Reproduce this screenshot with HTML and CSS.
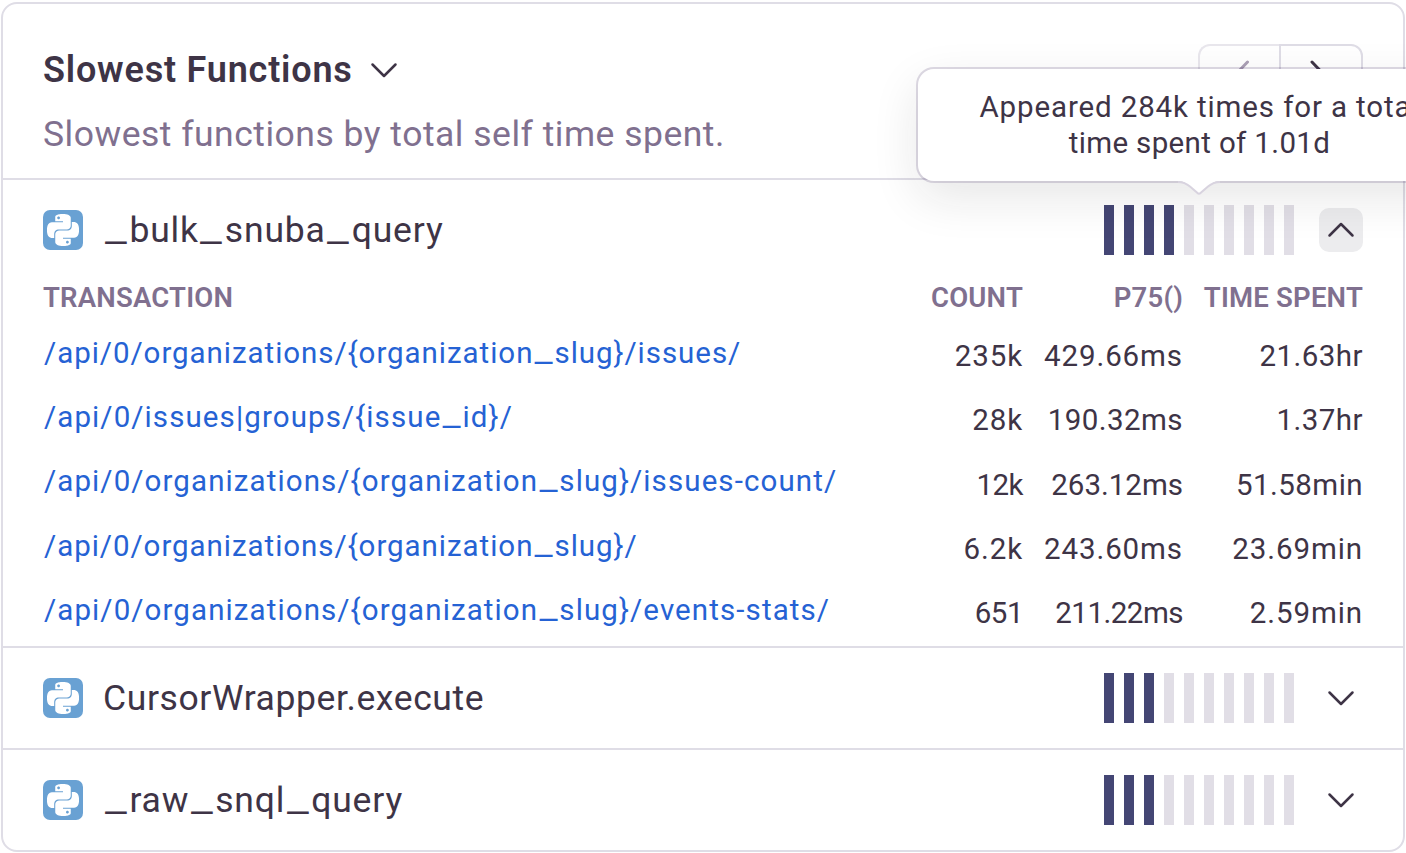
FILE: index.html
```
<!DOCTYPE html>
<html lang="en">
<head>
<meta charset="utf-8">
<title>Slowest Functions</title>
<link rel="stylesheet" href="styles.css">
</head>
<body>
<svg width="0" height="0" class="defs" aria-hidden="true">
  <symbol id="python" viewBox="0 0 24 24"><path fill="#fff" d="M14.25.18l.9.2.73.26.59.3.45.32.34.34.25.34.16.33.1.3.04.26.02.2-.01.13V8.5l-.05.63-.13.55-.21.46-.26.38-.3.31-.33.25-.35.19-.35.14-.33.1-.3.07-.26.04-.21.02H8.77l-.69.05-.59.14-.5.22-.41.27-.33.32-.27.35-.2.36-.15.37-.1.35-.07.32-.04.27-.02.21v3.06H3.17l-.21-.03-.28-.07-.32-.12-.35-.18-.36-.26-.36-.36-.35-.46-.32-.59-.28-.73-.21-.88-.14-1.05-.05-1.23.06-1.22.16-1.04.24-.87.32-.71.36-.57.4-.44.42-.33.42-.24.4-.16.36-.1.32-.05.24-.01h.16l.06.01h8.16v-.83H6.18l-.01-2.75-.02-.37.05-.34.11-.31.17-.28.25-.26.31-.23.38-.2.44-.18.51-.15.58-.12.64-.1.71-.06.77-.04.84-.02 1.27.05zm-6.3 1.98l-.23.33-.08.41.08.41.23.34.33.22.41.09.41-.09.33-.22.23-.34.08-.41-.08-.41-.23-.33-.33-.22-.41-.09-.41.09zm13.09 3.95l.28.06.32.12.35.18.36.27.36.35.35.47.32.59.28.73.21.88.14 1.04.05 1.23-.06 1.23-.16 1.04-.24.86-.32.71-.36.57-.4.45-.42.33-.42.24-.4.16-.36.09-.32.05-.24.02-.16-.01h-8.22v.82h5.84l.01 2.76.02.36-.05.34-.11.31-.17.29-.25.25-.31.24-.38.2-.44.17-.51.15-.58.13-.64.09-.71.07-.77.04-.84.01-1.27-.04-1.07-.14-.9-.2-.73-.25-.59-.3-.45-.33-.34-.34-.25-.34-.16-.33-.1-.3-.04-.25-.02-.2.01-.13v-5.34l.05-.64.13-.54.21-.46.26-.38.3-.32.33-.24.35-.2.35-.14.33-.1.3-.06.26-.04.21-.02.13-.01h5.84l.69-.05.59-.14.5-.21.41-.28.33-.32.27-.35.2-.36.15-.36.1-.35.07-.32.04-.28.02-.21V6.07h2.09l.14.01zm-6.47 14.25l-.23.33-.08.41.08.41.23.33.33.23.41.08.41-.08.33-.23.23-.33.08-.41-.08-.41-.23-.33-.33-.23-.41-.08-.41.08z"/></symbol>
  <symbol id="down" viewBox="0 0 28 28"><path d="M2.5 8.5 14 20 25.5 8.5" fill="none" stroke="#3e3446" stroke-width="2.5" stroke-linecap="round" stroke-linejoin="round"/></symbol>
</svg>
<main class="card">
  <header class="head">
    <div class="titles">
      <h1 class="title">Slowest Functions <svg class="chev"><use href="#down"/></svg></h1>
      <p class="subtitle">Slowest functions by total self time spent.</p>
    </div>
    <div class="pager">
      <button class="page prev" aria-label="Previous"><svg width="28" height="28" viewBox="0 0 28 28"><path d="M21.5 2 10 14 21.5 26"/></svg></button>
      <button class="page next" aria-label="Next"><svg width="28" height="28" viewBox="0 0 28 28"><path d="M6 2 17.5 14 6 26"/></svg></button>
    </div>
  </header>

  <section class="item">
    <div class="row">
      <span class="logo"><svg><use href="#python"/></svg></span>
      <span class="name snake"><i>_</i>bulk<i>_</i>snuba<i>_</i>query</span>
      <span class="bars"><b></b><b></b><b></b><b></b><s></s><s></s><s></s><s></s><s></s><s></s></span>
      <button class="toggle open" aria-label="Collapse"><svg class="chev"><use href="#down"/></svg></button>
    </div>
    <div class="table">
      <div class="tr th"><span>TRANSACTION</span><span>COUNT</span><span>P75()</span><span>TIME SPENT</span></div>
      <div class="tr"><a>/api/0/organizations/{organization<i>_</i>slug}/issues/</a><span class="wide">235k</span><span class="wide">429.66ms</span><span>21.63hr</span></div>
      <div class="tr"><a class="long">/api/0/issues|groups/{issue<i>_</i>id}/</a><span class="wide">28k</span><span>190.32ms</span><span>1.37hr</span></div>
      <div class="tr"><a class="long">/api/0/organizations/{organization<i>_</i>slug}/issues-count/</a><span class="tighter">12k</span><span class="tight">263.12ms</span><span>51.58min</span></div>
      <div class="tr"><a>/api/0/organizations/{organization<i>_</i>slug}/</a><span class="wide">6.2k</span><span class="wide">243.60ms</span><span class="wide">23.69min</span></div>
      <div class="tr"><a class="long">/api/0/organizations/{organization<i>_</i>slug}/events-stats/</a><span class="tighter">651</span><span class="tighter">211.22ms</span><span class="wide">2.59min</span></div>
    </div>
  </section>

  <section class="item">
    <div class="row">
      <span class="logo"><svg><use href="#python"/></svg></span>
      <span class="name">CursorWrapper.execute</span>
      <span class="bars"><b></b><b></b><b></b><s></s><s></s><s></s><s></s><s></s><s></s><s></s></span>
      <button class="toggle" aria-label="Expand"><svg class="chev"><use href="#down"/></svg></button>
    </div>
  </section>

  <section class="item">
    <div class="row">
      <span class="logo"><svg><use href="#python"/></svg></span>
      <span class="name snake"><i>_</i>raw<i>_</i>snql<i>_</i>query</span>
      <span class="bars"><b></b><b></b><b></b><s></s><s></s><s></s><s></s><s></s><s></s><s></s></span>
      <button class="toggle" aria-label="Expand"><svg class="chev"><use href="#down"/></svg></button>
    </div>
  </section>
</main>

<div class="tooltip" role="tooltip">
  <span class="line">Appeared 284k times for a total</span>
  <span class="line last">time spent of 1.01d</span>
  <svg class="arrow" width="44" height="18" viewBox="0 0 44 18"><path d="M1 0V2C7 2 10 5 13 7.500L22 15.500 31 7.500C34 5 37 2 43 2V0Z" fill="#fff"/><path d="M1 3C7 3 10 5 13 7.500L20.500 14Q22 15.500 23.500 14L31 7.500C34 5 37 3 43 3" fill="none" stroke="#d8d3df" stroke-width="2"/></svg>
</div>
</body>
</html>
```
FILE: styles.css
```
* { box-sizing: border-box; }
html, body { height: 100%; }
body {
  margin: 0;
  padding: 2px 1px 0;
  position: relative;
  overflow: hidden;
  background: #fff;
  color: #3e3446;
  font-family: Roboto, "Liberation Sans", sans-serif;
}
.defs { position: absolute; }
i { font-style: normal; }
button { padding: 0; border: 0; background: none; display: flex; align-items: center; justify-content: center; }
svg { display: block; flex: none; }

.card { height: 850px; border: 2px solid #dfdde6; border-radius: 16px; overflow: hidden; }

.head { display: flex; justify-content: space-between; height: 176px; padding: 40px 40px 0; border-bottom: 2px solid #dfdde6; }
.titles { padding-top: 5px; }
.title { display: flex; align-items: center; gap: 17px; margin: 0; font-size: 36px; font-weight: 600; line-height: 42px; letter-spacing: .8px; }
.chev { width: 28px; height: 28px; }
.subtitle { margin: 22.500px 0 0; font-size: 35.500px; line-height: 40px; letter-spacing: .5px; color: #80708f; }

.pager { display: flex; height: 60px; }
.page { width: 84px; border: 2px solid #dfdde6; }
.page path { fill: none; stroke: #3e3446; stroke-width: 3; stroke-linecap: round; stroke-linejoin: round; }
.prev { width: 81px; border-right: 0; border-radius: 12px 0 0 12px; border-color: #e9e7ed; }
.next { border-radius: 0 12px 12px 0; }
.next svg { margin-right: 2px; }
.prev path { stroke: #aba0b5; }

.item + .item { border-top: 2px solid #dfdde6; }
.row { display: flex; align-items: center; height: 100px; padding: 0 40px; }
.logo { display: flex; align-items: center; justify-content: center; width: 40px; height: 40px; border-radius: 7px; background: #69a1d3; }
.logo svg { width: 32px; height: 32px; }
.name { flex: 1; margin-left: 20px; font-size: 35.500px; line-height: 40px; letter-spacing: .6px; }
.snake { letter-spacing: .85px; }
.name i { display: inline-block; margin: 0 4.500px; transform: translateY(-1.500px) scaleX(1.36); }
.name i:first-child { margin-left: 5px; }
.bars { display: flex; gap: 10px; height: 50px; margin-right: 25px; }
.bars b, .bars s { width: 10px; background: #444674; }
.bars s { background: #e1dee6; }
.toggle { width: 44px; height: 44px; border-radius: 10px; }
.open { background: #ececee; }
.open svg { transform: rotate(180deg); }

.table { height: 366px; padding: 0 40px; }
.tr { display: grid; grid-template-columns: 1fr 140px 160px 180px; align-items: center; height: 64.250px; font-size: 29.500px; line-height: 36px; letter-spacing: .45px; white-space: nowrap; }
.tr > :not(:first-child) { text-align: right; }
.th { height: 33px; margin-bottom: 11px; font-size: 27.500px; font-weight: 600; letter-spacing: .2px; color: #80708f; }
.tr a { padding: 0 0 6.500px 1px; color: #2562d4; letter-spacing: .96px; }
.tr a.long { letter-spacing: 1.1px; }
.tr a i { display: inline-block; margin: 0 3.400px; transform: translateY(-1.500px) scaleX(1.36); }
.tr .wide { letter-spacing: .9px; }
.tr .tight { letter-spacing: 0; }
.tr .tighter { letter-spacing: -.5px; }

/* Tooltip anchored over the first row's bars */
.tooltip {
  position: absolute;
  left: 918px;
  top: 69px;
  width: 562px;
  height: 112px;
  padding: 20px 0 0 1px;
  border-radius: 16px;
  background: #fff;
  box-shadow: 0 0 0 2px rgba(58, 35, 95, .17), 0 16px 48px rgba(30, 30, 30, .11);
  font-size: 29.500px;
  line-height: 36px;
  text-align: center;
}
.line { display: block; letter-spacing: .87px; }
.last { letter-spacing: .35px; }
.arrow { position: absolute; left: 259px; top: 110px; }
```
